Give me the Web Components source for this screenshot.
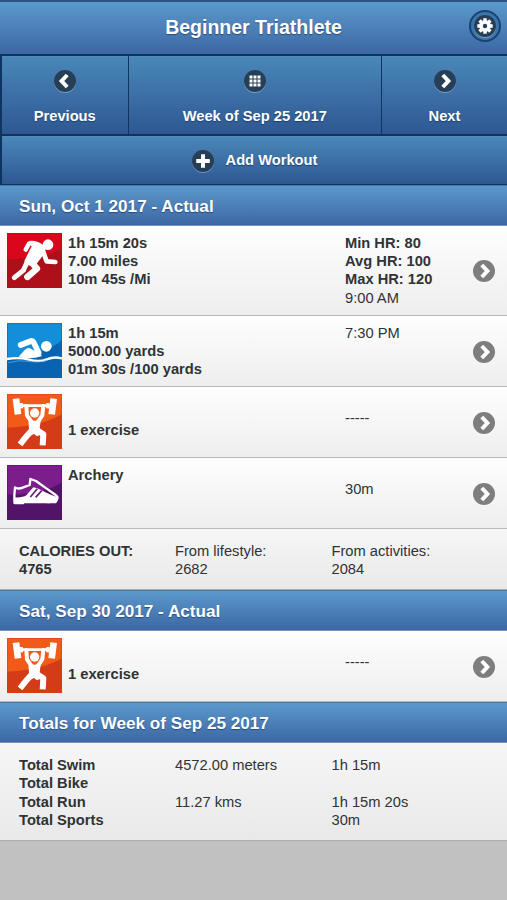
<!DOCTYPE html>
<html lang="en">
<head>
<meta charset="utf-8">
<title>Beginner Triathlete</title>
<style>
  html {
    background: #c1c1c1;
  }

  body {
    margin: 0;
    min-height: 900px;
    background: #c1c1c1;
    font-family: "Liberation Sans", Arial, sans-serif;
    font-size: 14.7px;
    line-height: 18.35px;
    color: #2f3335;
  }
</style>
</head>
<body>

<app-header>Beginner Triathlete</app-header>

<week-nav>
  <nav-button icon="left">Previous</nav-button>
  <nav-button icon="grid">Week of Sep 25 2017</nav-button>
  <nav-button icon="right">Next</nav-button>
  <nav-button slot="action" icon="plus" inline>Add Workout</nav-button>
</week-nav>

<section-bar>Sun, Oct 1 2017 - Actual</section-bar>
<workout-row sport="run" style="--height: 89px">
  <div>1h 15m 20s</div>
  <div>7.00 miles</div>
  <div>10m 45s /Mi</div>
  <b slot="info">Min HR: 80</b>
  <b slot="info">Avg HR: 100</b>
  <b slot="info">Max HR: 120</b>
  <span slot="info">9:00 AM</span>
</workout-row>
<workout-row sport="swim">
  <div>1h 15m</div>
  <div>5000.00 yards</div>
  <div>01m 30s /100 yards</div>
  <span slot="info">7:30 PM</span>
</workout-row>
<workout-row sport="strength" style="--text-top: 34px; --info-top: 22px">
  <div>1 exercise</div>
  <span slot="info">-----</span>
</workout-row>
<workout-row sport="other" style="--info-top: 22px">
  <div>Archery</div>
  <span slot="info">30m</span>
</workout-row>
<stat-table style="--height: 61px">
  <b>CALORIES OUT:</b><span>From lifestyle:</span><span>From activities:</span>
  <b>4765</b><span>2682</span><span>2084</span>
</stat-table>

<section-bar>Sat, Sep 30 2017 - Actual</section-bar>
<workout-row sport="strength" style="--text-top: 34px; --info-top: 22px">
  <div>1 exercise</div>
  <span slot="info">-----</span>
</workout-row>

<section-bar>Totals for Week of Sep 25 2017</section-bar>
<stat-table style="--height: 98px">
  <b>Total Swim</b><span>4572.00 meters</span><span>1h 15m</span>
  <b>Total Bike</b><span></span><span></span>
  <b>Total Run</b><span>11.27 kms</span><span>1h 15m 20s</span>
  <b>Total Sports</b><span></span><span>30m</span>
</stat-table>

<script>
const DISC_ICONS = {
  left: '<path d="M13.2 5 7.6 11l5.6 6" fill="none" stroke="#fff" stroke-width="4"/>',
  right: '<path d="M8.8 5 14.4 11l-5.6 6" fill="none" stroke="#fff" stroke-width="4"/>',
  plus: '<path d="M11 4.2v13.6M4.2 11h13.6" stroke="#fff" stroke-width="4"/>',
  grid: '<path d="M5.5 5.5h3v3h-3zM9.5 5.5h3v3h-3zM13.5 5.5h3v3h-3zM5.5 9.5h3v3h-3zM9.5 9.5h3v3h-3zM13.5 9.5h3v3h-3zM5.5 13.5h3v3h-3zM9.5 13.5h3v3h-3zM13.5 13.5h3v3h-3z" fill="#fff"/>',
  gear: '<path d="M11 3.3v15.4M3.3 11h15.4M5.55 5.55l10.9 10.9M16.45 5.55l-10.9 10.9" stroke="#fff" stroke-width="3.4"/><circle cx="11" cy="11" r="5.9" fill="#fff"/><circle cx="11" cy="11" r="2.2" fill="#243f5c"/>'
};

const SPORT_ICONS = {
  run: {
    top: '#d8071b', bottom: '#ae1019',
    wave: 'M0 78Q90 82 165 48V165H0z',
    figure: `
      <circle cx="123" cy="35" r="16" fill="#fff"/>
      <path d="M66 24Q86 20 108 35Q120 46 112 62L86 96Q62 104 52 84L74 40z" fill="#fff"/>
      <g fill="none" stroke="#fff" stroke-linecap="round" stroke-linejoin="round">
        <path d="M78 31 66 32 56 50" stroke-width="13"/>
        <path d="M107 52 119 85 145 87" stroke-width="14"/>
        <path d="M70 84 90 107 61 132" stroke-width="19"/>
        <path d="M62 84 49 112 22 134" stroke-width="15"/>
      </g>`
  },
  swim: {
    top: '#138ed9', bottom: '#0864b2',
    wave: 'M0 105Q110 98 165 51V165H0z',
    figure: `
      <circle cx="118" cy="70" r="16" fill="#fff"/>
      <path d="M36 100 54 80Q63 72 72 77L106 99Q72 110 36 103z" fill="#fff"/>
      <path d="M41 66 72 54Q77 53 80 58L95 90" fill="none" stroke="#fff" stroke-width="17" stroke-linecap="round" stroke-linejoin="round"/>
      <path d="M0 108Q35 102 66 110T119 109T165 106" fill="none" stroke="#fff" stroke-width="7"/>
      <path d="M4 119Q35 110 66 115T119 112" fill="none" stroke="#70b5e4" stroke-width="2"/>`
  },
  strength: {
    top: '#f25a18', bottom: '#d43b18',
    wave: 'M0 101Q100 98 165 61V165H0z',
    figure: `
      <circle cx="83" cy="57" r="14" fill="#fff"/>
      <g fill="none" stroke="#fff" stroke-linejoin="round">
        <path d="M32 35H134" stroke-width="8"/>
        <path d="M27 14 33 61M140 14 134 61" stroke-width="20"/>
        <path d="M43 27 44 43M123 27 122 43" stroke-width="9"/>
        <path d="M58 36 60 64 75 86M109 36 106 64 91 86" stroke-width="12" stroke-linecap="round"/>
        <path d="M76 107 60 125 39 151M88 107 109 121 107 154" stroke-width="18"/>
      </g>
      <path d="M64 74Q83 86 102 74L98 102 108 118 90 127 81 120 66 127 66 105z" fill="#fff"/>`
  },
  other: {
    top: '#7b1e8c', bottom: '#521466',
    wave: 'M0 88Q105 92 165 52V165H0z',
    figure: `
      <path d="M24 67Q33 74 49 67L68 60 70 42 87 48 119 71 146 90Q153 95 151 101L146 111H50L48 114H23L22 92z" fill="none" stroke="#fff" stroke-width="7" stroke-linejoin="round"/>
      <path d="M20 97Q47 99 58 91L79 67 91 70 115 82Q135 92 152 97L151 109Q140 116 115 114H51L48 117H20z" fill="#fff"/>
      <path d="M70 96 91 71M86 97 104 77" stroke="#68187c" stroke-width="5"/>`
  }
};

class DiscIcon extends HTMLElement {
  constructor() {
    super();
    this.attachShadow({mode: "open"});
  }

  connectedCallback() {
    this.shadowRoot.innerHTML = `
      <style>
        :host {
          display: block;
          width: 22px;
          height: 22px;
          flex: none;
          border-radius: 50%;
          background: var(--disc, #263f57);
          box-shadow: 0 1px 0 rgba(255, 255, 255, .3);
        }
        svg {
          display: block;
        }
      </style>
      <svg width="100%" height="100%" viewBox="0 0 22 22">${DISC_ICONS[this.getAttribute("name")]}</svg>
    `;
  }
}

class SportIcon extends HTMLElement {
  constructor() {
    super();
    this.attachShadow({mode: "open"});
  }

  connectedCallback() {
    const name = this.getAttribute("name");
    const icon = SPORT_ICONS[name];
    this.shadowRoot.innerHTML = `
      <style>
        :host {
          display: block;
          width: 55px;
          height: 55px;
        }
        svg {
          display: block;
        }
      </style>
      <svg width="55" height="55" viewBox="0 0 165 165">
        <rect width="165" height="165" fill="${icon.top}"/>
        <path d="${icon.wave}" fill="${icon.bottom}"/>
        <rect x="1.5" y="1.5" width="162" height="162" fill="none" stroke="${icon.bottom}" stroke-width="3" opacity=".5"/>
        ${icon.figure}
      </svg>
    `;
  }
}

class AppHeader extends HTMLElement {
  constructor() {
    super();
    this.attachShadow({mode: "open"});
  }

  connectedCallback() {
    this.shadowRoot.innerHTML = `
      <style>
        :host {
          display: grid;
          grid-template-columns: 40px 1fr 40px;
          align-items: center;
          box-sizing: border-box;
          height: 56px;
          padding-bottom: 2px;
          border-top: 2px solid #2c5587;
          border-bottom: 2px solid #0d345b;
          background: linear-gradient(#5b99cc, #3c67a4);
          color: #fff;
          text-shadow: 0 1px 1px #2a4c78;
        }
        h1 {
          margin: 0;
          font-size: 19.5px;
          line-height: 24px;
          text-align: center;
        }
        .ring {
          display: flex;
          align-items: center;
          justify-content: center;
          box-sizing: border-box;
          width: 32px;
          height: 32px;
          margin: 0 0 3px 2px;
          border: 2px solid #17436f;
          border-radius: 50%;
          background: #3d75aa;
        }
      </style>
      <span></span>
      <h1><slot></slot></h1>
      <div class="ring"><disc-icon name="gear"></disc-icon></div>
    `;
  }
}

class WeekNav extends HTMLElement {
  constructor() {
    super();
    this.attachShadow({mode: "open"});
  }

  connectedCallback() {
    this.shadowRoot.innerHTML = `
      <style>
        :host {
          display: block;
          padding-left: 2px;
          background: #0d355f;
        }
        .weeks {
          display: grid;
          grid-template-columns: 125.5px 251.5px 1fr;
          gap: 1.5px;
          height: 77.5px;
          margin-bottom: 2px;
        }
        .action {
          display: grid;
          height: 48px;
          padding-bottom: 1.5px;
        }
      </style>
      <div class="weeks"><slot></slot></div>
      <div class="action"><slot name="action"></slot></div>
    `;
  }
}

class NavButton extends HTMLElement {
  constructor() {
    super();
    this.attachShadow({mode: "open"});
  }

  connectedCallback() {
    this.shadowRoot.innerHTML = `
      <style>
        :host {
          display: flex;
          flex-direction: column;
          align-items: center;
          gap: 15px;
          box-sizing: border-box;
          padding-top: 13px;
          border-top: 1px solid #5589b7;
          background: linear-gradient(#4a87b9, #2e5791);
          color: #fff;
          font-weight: bold;
          text-shadow: 0 1px 1px #1c3d68;
        }
        :host([inline]) {
          flex-direction: row;
          justify-content: center;
          gap: 12px;
          padding: 1px 0 0;
        }
      </style>
      <disc-icon name="${this.getAttribute("icon")}"></disc-icon>
      <span><slot></slot></span>
    `;
  }
}

class SectionBar extends HTMLElement {
  constructor() {
    super();
    this.attachShadow({mode: "open"});
  }

  connectedCallback() {
    this.shadowRoot.innerHTML = `
      <style>
        :host {
          display: block;
          box-sizing: border-box;
          height: 41px;
          padding-left: 19px;
          border-top: 1px solid #4578a8;
          border-bottom: 1px solid #7891b4;
          background: linear-gradient(#5b99cc, #3c67a4);
          color: #fff;
          font-size: 17.15px;
          font-weight: bold;
          line-height: 40px;
          text-shadow: 0 1px 1px #2a4c78;
        }
      </style>
      <slot></slot>
    `;
  }
}

class WorkoutRow extends HTMLElement {
  constructor() {
    super();
    this.attachShadow({mode: "open"});
  }

  connectedCallback() {
    this.shadowRoot.innerHTML = `
      <style>
        :host {
          display: grid;
          grid-template-columns: 61px 277px 1fr 22px;
          box-sizing: content-box;
          height: var(--height, 70px);
          padding: 0 12px 0 7px;
          border-bottom: 1px solid #b9b9b9;
          background: linear-gradient(#fefefe, #eeeeee);
        }
        sport-icon {
          margin-top: 7px;
        }
        .text {
          padding-top: var(--text-top, 7.5px);
          font-weight: bold;
        }
        .info {
          display: flex;
          flex-direction: column;
          padding-top: var(--info-top, 7.5px);
        }
        disc-icon {
          --disc: #7e7e7e;
          align-self: center;
          margin-top: 1px;
        }
      </style>
      <sport-icon name="${this.getAttribute("sport")}"></sport-icon>
      <div class="text"><slot></slot></div>
      <div class="info"><slot name="info"></slot></div>
      <disc-icon name="right"></disc-icon>
    `;
  }
}

class StatTable extends HTMLElement {
  constructor() {
    super();
    this.attachShadow({mode: "open"});
  }

  connectedCallback() {
    this.shadowRoot.innerHTML = `
      <style>
        :host {
          display: grid;
          grid-template-columns: 156px 156.5px 1fr;
          grid-auto-rows: 18.35px;
          align-content: start;
          box-sizing: border-box;
          height: var(--height);
          padding: 13px 19px 0;
          border-bottom: 1px solid #adadad;
          background: linear-gradient(#f6f6f6, #e9e9e9);
        }
      </style>
      <slot></slot>
    `;
  }
}

customElements.define("disc-icon", DiscIcon);
customElements.define("sport-icon", SportIcon);
customElements.define("app-header", AppHeader);
customElements.define("week-nav", WeekNav);
customElements.define("nav-button", NavButton);
customElements.define("section-bar", SectionBar);
customElements.define("workout-row", WorkoutRow);
customElements.define("stat-table", StatTable);
</script>
</body>
</html>
